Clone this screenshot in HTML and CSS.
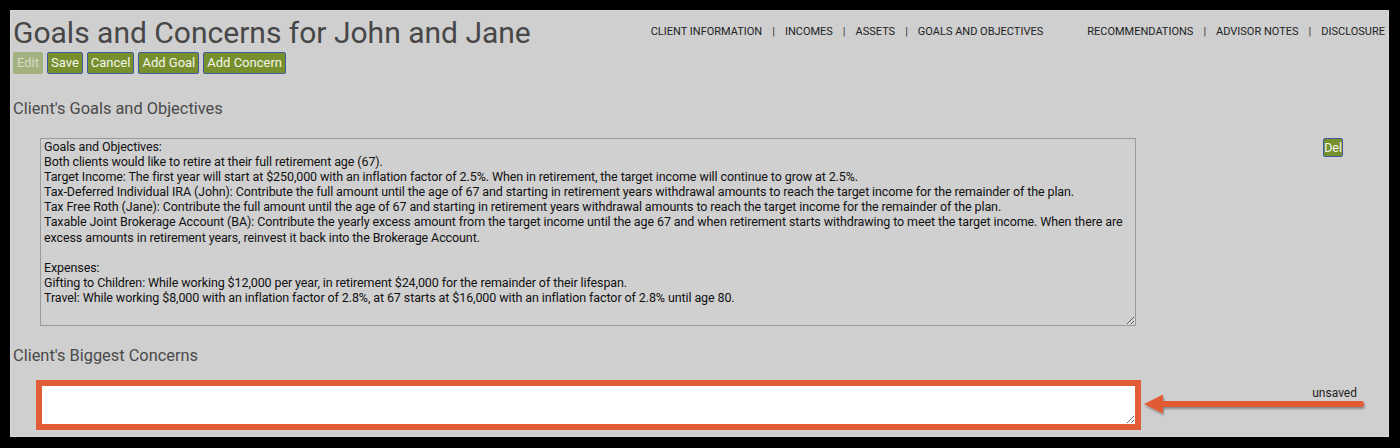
FILE: index.html
```html
<!DOCTYPE html>
<html lang="en">
<head>
<meta charset="utf-8">
<title>Goals and Concerns</title>
<link rel="stylesheet" href="styles.css">
</head>
<body>
<div class="panel">
  <header class="top">
    <div class="title-block">
      <h1 class="page-title">Goals and Concerns for John and Jane</h1>
      <div class="toolbar">
        <button class="btn btn-disabled" type="button">Edit</button>
        <button class="btn" type="button">Save</button>
        <button class="btn" type="button">Cancel</button>
        <button class="btn" type="button">Add Goal</button>
        <button class="btn" type="button">Add Concern</button>
      </div>
    </div>
    <nav class="tabs">
      <div class="tab-group">
        <a class="tab">CLIENT INFORMATION</a><span class="sep">|</span>
        <a class="tab">INCOMES</a><span class="sep">|</span>
        <a class="tab">ASSETS</a><span class="sep">|</span>
        <a class="tab">GOALS AND OBJECTIVES</a>
      </div>
      <div class="tab-group">
        <a class="tab">RECOMMENDATIONS</a><span class="sep">|</span>
        <a class="tab">ADVISOR NOTES</a><span class="sep">|</span>
        <a class="tab">DISCLOSURE</a>
      </div>
    </nav>
  </header>

  <h2 class="section-title section-goals">Client's Goals and Objectives</h2>
  <div class="item-row goal-row">
    <textarea class="goal-text">Goals and Objectives:
Both clients would like to retire at their full retirement age (67).
Target Income: The first year will start at $250,000 with an inflation factor of 2.5%. When in retirement, the target income will continue to grow at 2.5%.
Tax-Deferred Individual IRA (John): Contribute the full amount until the age of 67 and starting in retirement years withdrawal amounts to reach the target income for the remainder of the plan.
Tax Free Roth (Jane): Contribute the full amount until the age of 67 and starting in retirement years withdrawal amounts to reach the target income for the remainder of the plan.
Taxable Joint Brokerage Account (BA): Contribute the yearly excess amount from the target income until the age 67 and when retirement starts withdrawing to meet the target income. When there are excess amounts in retirement years, reinvest it back into the Brokerage Account.

Expenses:
Gifting to Children: While working $12,000 per year, in retirement $24,000 for the remainder of their lifespan.
Travel: While working $8,000 with an inflation factor of 2.8%, at 67 starts at $16,000 with an inflation factor of 2.8% until age 80.</textarea>
    <button class="btn btn-del" type="button">Del</button>
  </div>

  <h2 class="section-title section-concerns">Client's Biggest Concerns</h2>
  <div class="item-row concern-row">
    <textarea class="concern-text"></textarea>
    <span class="status">unsaved</span>
  </div>

  <svg class="callout-arrow" width="224" height="26" viewBox="0 0 224 26" aria-hidden="true">
    <defs>
      <filter id="arrowShadow" x="-10%" y="-50%" width="120%" height="200%">
        <feDropShadow dx="1" dy="2" stdDeviation="1.2" flood-color="#000" flood-opacity="0.35"/>
      </filter>
    </defs>
    <g filter="url(#arrowShadow)" fill="#e15b34" stroke="#e15b34">
      <line x1="17" y1="10" x2="217" y2="10" stroke-width="6" stroke-linecap="round"/>
      <polygon points="0,10 19,0.5 19,19.5" stroke="none"/>
    </g>
  </svg>
</div>
</body>
</html>
```

FILE: styles.css
```css
* { box-sizing: border-box; }

html, body {
  margin: 0;
  padding: 0;
}

body {
  width: 1400px;
  height: 448px;
  background: #000;
  overflow: hidden;
  font-family: Roboto, "Liberation Sans", Arial, sans-serif;
}

.panel {
  position: relative;
  margin: 10px 0 0 10px;
  width: 1379px;
  height: 427px;
  border: 1px solid #d9d9d9;
  background: #cfcfcf;
  padding: 0 3px 0 2px;
  overflow: hidden;
}

.top {
  display: flex;
  justify-content: space-between;
  align-items: flex-start;
}

.page-title {
  margin: 4px 0 0 0;
  font-size: 30px;
  line-height: 35px;
  font-weight: 400;
  color: #474747;
}

.toolbar {
  display: flex;
  gap: 4px;
  margin-top: 2px;
}

.btn {
  font-family: Roboto, "Liberation Sans", Arial, sans-serif;
  font-size: 13px;
  height: 22px;
  padding: 0 3px;
  background: #77902d;
  color: #f4f6ee;
  border: 1px solid #3e5b9f;
  border-radius: 2px;
  line-height: 20px;
  cursor: pointer;
}

.btn-disabled {
  background: #a3b07f;
  border-color: #a3b07f;
  color: #d6dcc6;
}

.tabs {
  display: flex;
  gap: 44px;
  margin-top: 14px;
}

.tab-group {
  display: flex;
  align-items: center;
}

.tab {
  font-size: 11px;
  line-height: 13px;
  color: #222;
}

.sep {
  font-size: 11px;
  line-height: 13px;
  color: #333;
  margin: 0 10px;
}

.section-title {
  margin: 0;
  font-size: 16.4px;
  line-height: 19px;
  font-weight: 400;
  color: #4a4a4a;
}

.section-goals {
  margin-top: 25px;
}

.section-concerns {
  margin-top: 20px;
}

.item-row {
  display: flex;
  align-items: flex-start;
}

.goal-row {
  margin-top: 20px;
}

.goal-text {
  margin: 0 0 0 27px;
  width: 1096px;
  height: 188px;
  padding: 0 3px;
  border: 1px solid #9a9a9a;
  background: #d0d0d0;
  color: #111;
  font-family: Roboto, "Liberation Sans", Arial, sans-serif;
  font-size: 12.5px;
  letter-spacing: -0.1px;
  line-height: 15.1px;
  overflow: hidden;
  resize: both;
}

.btn-del {
  margin: 0 42px 0 auto;
  height: 19px;
  padding: 0;
  font-size: 12.5px;
  line-height: 17px;
}

.concern-row {
  margin-top: 15px;
}

.concern-text {
  margin: 0 0 0 23px;
  width: 1105px;
  height: 50px;
  padding: 1px 3px;
  border: 6px solid #e15b34;
  background: #fff;
  font-family: Roboto, "Liberation Sans", Arial, sans-serif;
  font-size: 13px;
  overflow: hidden;
  resize: both;
}

.status {
  margin: 6px 28px 0 auto;
  font-size: 12px;
  line-height: 14px;
  color: #222;
}

.callout-arrow {
  position: absolute;
  left: 1133px;
  top: 383px;
}
```
